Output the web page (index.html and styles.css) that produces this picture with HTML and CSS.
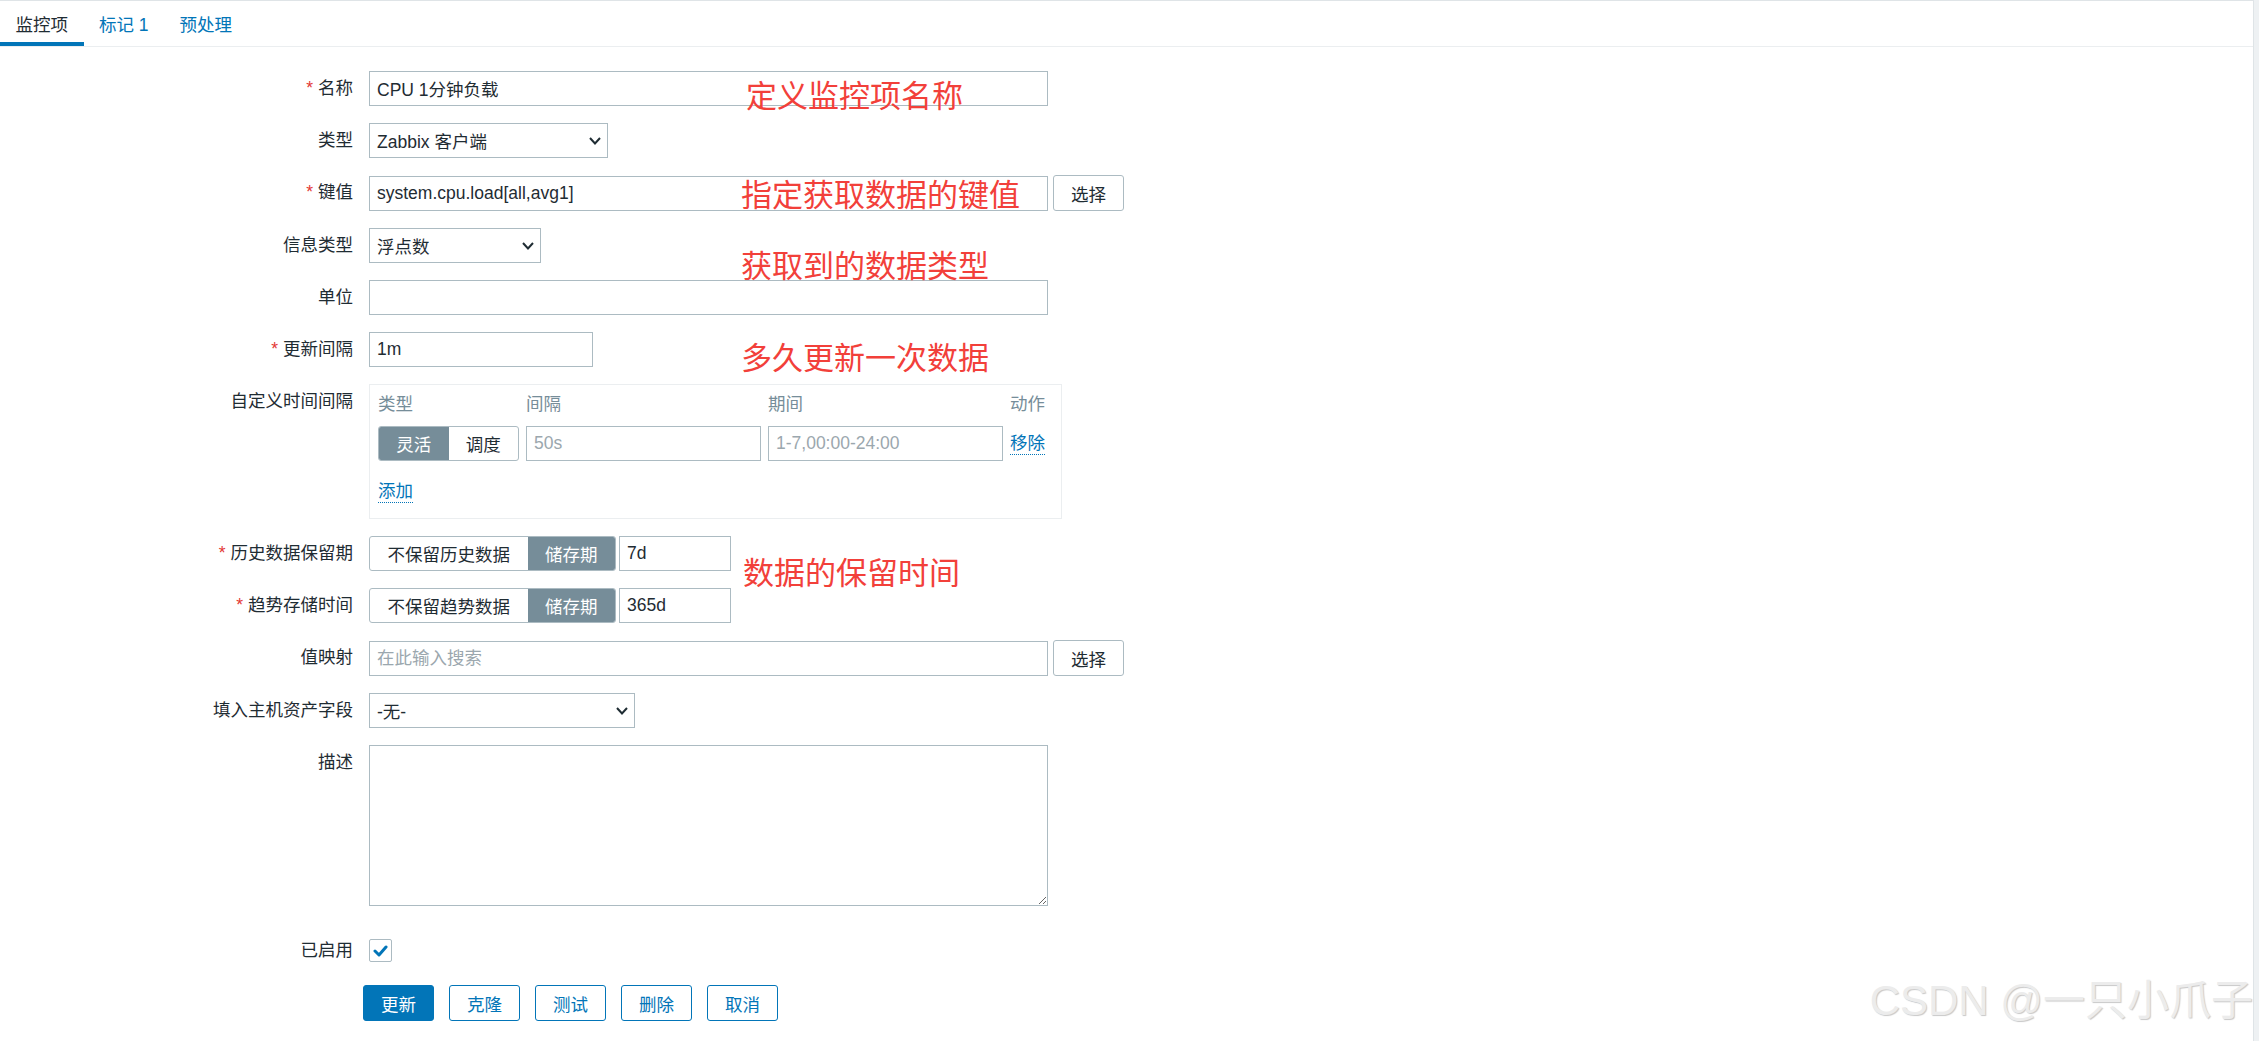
FILE: index.html
```html
<!DOCTYPE html>
<html lang="zh-CN">
<head>
<meta charset="utf-8">
<title>监控项</title>
<link rel="stylesheet" href="styles.css">
</head>
<body>
<div class="page">
  <nav class="tabs">
    <a class="tab active">监控项</a>
    <a class="tab">标记 1</a>
    <a class="tab">预处理</a>
  </nav>

  <form class="form">
    <label class="lbl req">名称</label>
    <div class="field"><input class="input w-full" value="CPU 1分钟负载"></div>

    <label class="lbl">类型</label>
    <div class="field">
      <div class="select w-type"><span>Zabbix 客户端</span><svg class="chev" width="12" height="8" viewBox="0 0 12 8"><polyline points="1,1 6,6.5 11,1" fill="none" stroke="#1f2c33" stroke-width="2"/></svg></div>
    </div>

    <label class="lbl req">键值</label>
    <div class="field"><input class="input w-full" value="system.cpu.load[all,avg1]"><button type="button" class="btn-alt">选择</button></div>

    <label class="lbl">信息类型</label>
    <div class="field">
      <div class="select w-info"><span>浮点数</span><svg class="chev" width="12" height="8" viewBox="0 0 12 8"><polyline points="1,1 6,6.5 11,1" fill="none" stroke="#1f2c33" stroke-width="2"/></svg></div>
    </div>

    <label class="lbl">单位</label>
    <div class="field"><input class="input w-full" value=""></div>

    <label class="lbl req">更新间隔</label>
    <div class="field"><input class="input w-interval" value="1m"></div>

    <label class="lbl">自定义时间间隔</label>
    <div class="field">
      <div class="intervals">
        <div class="iv-grid">
          <div class="iv-head">类型</div>
          <div class="iv-head">间隔</div>
          <div class="iv-head">期间</div>
          <div class="iv-head">动作</div>
          <div class="seg seg-small"><span class="on">灵活</span><span>调度</span></div>
          <input class="input iv-input" placeholder="50s">
          <input class="input iv-input" placeholder="1-7,00:00-24:00">
          <a class="link iv-action">移除</a>
        </div>
        <div class="iv-add"><a class="link">添加</a></div>
      </div>
    </div>

    <label class="lbl req">历史数据保留期</label>
    <div class="field tight">
      <div class="seg"><span>不保留历史数据</span><span class="on">储存期</span></div>
      <input class="input w-period" value="7d">
    </div>

    <label class="lbl req">趋势存储时间</label>
    <div class="field tight">
      <div class="seg"><span>不保留趋势数据</span><span class="on">储存期</span></div>
      <input class="input w-period" value="365d">
    </div>

    <label class="lbl">值映射</label>
    <div class="field"><input class="input w-full" placeholder="在此输入搜索"><button type="button" class="btn-alt">选择</button></div>

    <label class="lbl">填入主机资产字段</label>
    <div class="field">
      <div class="select w-inv"><span>-无-</span><svg class="chev" width="12" height="8" viewBox="0 0 12 8"><polyline points="1,1 6,6.5 11,1" fill="none" stroke="#1f2c33" stroke-width="2"/></svg></div>
    </div>

    <label class="lbl">描述</label>
    <div class="field"><textarea class="textarea"></textarea></div>

    <label class="lbl enabled">已启用</label>
    <div class="field enabled">
      <span class="check"><svg width="15" height="12" viewBox="0 0 15 12"><polyline points="2,6 6,10 13,2" fill="none" stroke="#0275b8" stroke-width="3" stroke-linecap="round" stroke-linejoin="round"/></svg></span>
    </div>

    <div class="lbl"></div>
    <div class="field buttons">
      <button type="button" class="btn primary">更新</button>
      <button type="button" class="btn">克隆</button>
      <button type="button" class="btn">测试</button>
      <button type="button" class="btn">删除</button>
      <button type="button" class="btn">取消</button>
    </div>
  </form>

  <div class="note n1">定义监控项名称</div>
  <div class="note n2">指定获取数据的键值</div>
  <div class="note n3">获取到的数据类型</div>
  <div class="note n4">多久更新一次数据</div>
  <div class="note n5">数据的保留时间</div>

  <div class="watermark">CSDN @一只小爪子</div>
</div>
</body>
</html>
```

FILE: styles.css
```css
* { box-sizing: border-box; }

html, body { margin: 0; padding: 0; }

body {
  background: #eef1f3;
  font-family: "Liberation Sans", Arial, "Noto Sans CJK SC", sans-serif;
  font-size: 17.5px;
  color: #1f2c33;
}

.page {
  position: relative;
  width: 2254px;
  min-height: 1041px;
  background: #fff;
  border-top: 1px solid #dfe4e7;
  border-right: 1px solid #dfe4e7;
}

/* tabs */
.tabs {
  display: flex;
  height: 46px;
  border-bottom: 1px solid #ebeef0;
}

.tab {
  display: flex;
  align-items: center;
  height: 45px;
  padding: 0 15.5px;
  border-top: 3px solid transparent;
  border-bottom: 4px solid transparent;
  color: #0275b8;
  text-decoration: none;
  white-space: nowrap;
}

.tab.active {
  color: #1f2c33;
  border-bottom-color: #0275b8;
}

/* form grid */
.form {
  display: grid;
  grid-template-columns: 353px 1fr;
  column-gap: 16px;
  row-gap: 17px;
  padding-top: 24px;
}

.lbl {
  text-align: right;
  line-height: 35px;
  white-space: nowrap;
}

.req::before {
  content: "*";
  color: #e33734;
  margin-right: 5px;
}

.field {
  display: flex;
  align-items: center;
  gap: 5px;
  min-height: 35px;
}

.field.tight { gap: 3px; }

.input {
  height: 35px;
  border: 1px solid #acbbc2;
  border-radius: 0;
  padding: 0 7px;
  font: inherit;
  color: #1f2c33;
  background: #fff;
  outline: none;
  margin: 0;
}

.input::placeholder { color: #9ba7ae; opacity: 1; }

.w-full { width: 679px; }
.w-interval { width: 224px; }
.w-period { width: 112px; }

.select {
  display: flex;
  align-items: center;
  justify-content: space-between;
  height: 35px;
  border: 1px solid #acbbc2;
  background: #fff;
  padding: 0 6px 0 7px;
  white-space: nowrap;
}

.w-type { width: 239px; }
.w-info { width: 172px; }
.w-inv { width: 266px; }

.chev { flex: none; }

.btn-alt {
  width: 71px;
  height: 36px;
  border: 1px solid #acbbc2;
  border-radius: 3px;
  background: #fff;
  color: #1f2c33;
  font: inherit;
  padding: 0;
}

/* segmented radio */
.seg {
  display: flex;
  height: 35px;
  border: 1px solid #acbbc2;
  border-radius: 3px;
  overflow: hidden;
  background: #fff;
}

.seg span {
  display: flex;
  align-items: center;
  justify-content: center;
  padding: 0 17.5px;
  white-space: nowrap;
}

.seg span.on {
  background: #768d99;
  color: #fff;
}

.seg-small { width: 141px; }
.seg-small span { flex: 1; padding: 0; }

/* custom intervals */
.intervals {
  width: 693px;
  border: 1px solid #ebeef0;
  padding: 8px 13px 15px 8px;
}

.iv-grid {
  display: grid;
  grid-template-columns: 141px 235px 235px auto;
  column-gap: 7px;
  align-items: center;
}

.iv-head {
  color: #768d99;
  line-height: 22px;
  margin-bottom: 11px;
}

.iv-input { width: 235px; }

.iv-action { justify-self: start; }

.iv-add {
  margin-top: 19px;
  line-height: 22px;
}

.link {
  color: #0275b8;
  text-decoration: none;
  border-bottom: 1px dotted #0275b8;
  display: inline-block;
  line-height: 21px;
}

/* textarea */
.textarea {
  width: 679px;
  height: 161px;
  border: 1px solid #acbbc2;
  font: inherit;
  resize: vertical;
  margin: 0;
  outline: none;
}

.field:has(.textarea) { align-items: flex-start; }

/* checkbox */
.enabled { margin-top: 10px; }

.check {
  display: flex;
  align-items: center;
  justify-content: center;
  width: 23px;
  height: 23px;
  border: 1px solid #acbbc2;
  border-radius: 2px;
  background: #fff;
}

/* buttons */
.buttons {
  gap: 15px;
  margin-left: -6px;
}

.btn {
  width: 71px;
  height: 36px;
  border: 1px solid #0275b8;
  border-radius: 3px;
  background: #fff;
  color: #0275b8;
  font: inherit;
  padding: 0;
}

.btn.primary {
  background: #0275b8;
  color: #fff;
}

/* annotations (overlay) */
.note {
  position: absolute;
  color: #f2403a;
  font-family: "Noto Sans CJK SC", sans-serif;
  font-size: 31px;
  line-height: 31px;
  white-space: nowrap;
}

.n1 { left: 746px; top: 77px; }
.n2 { left: 741px; top: 176px; }
.n3 { left: 741px; top: 247px; }
.n4 { left: 741px; top: 339px; }
.n5 { left: 743px; top: 554px; }

.watermark {
  position: absolute;
  right: 0;
  top: 979px;
  font-family: "Liberation Sans", "Noto Sans CJK SC", sans-serif;
  font-size: 42px;
  line-height: 42px;
  color: #ececec;
  text-shadow: 1px 1px 1px #c8c8c8;
  white-space: nowrap;
}
```
